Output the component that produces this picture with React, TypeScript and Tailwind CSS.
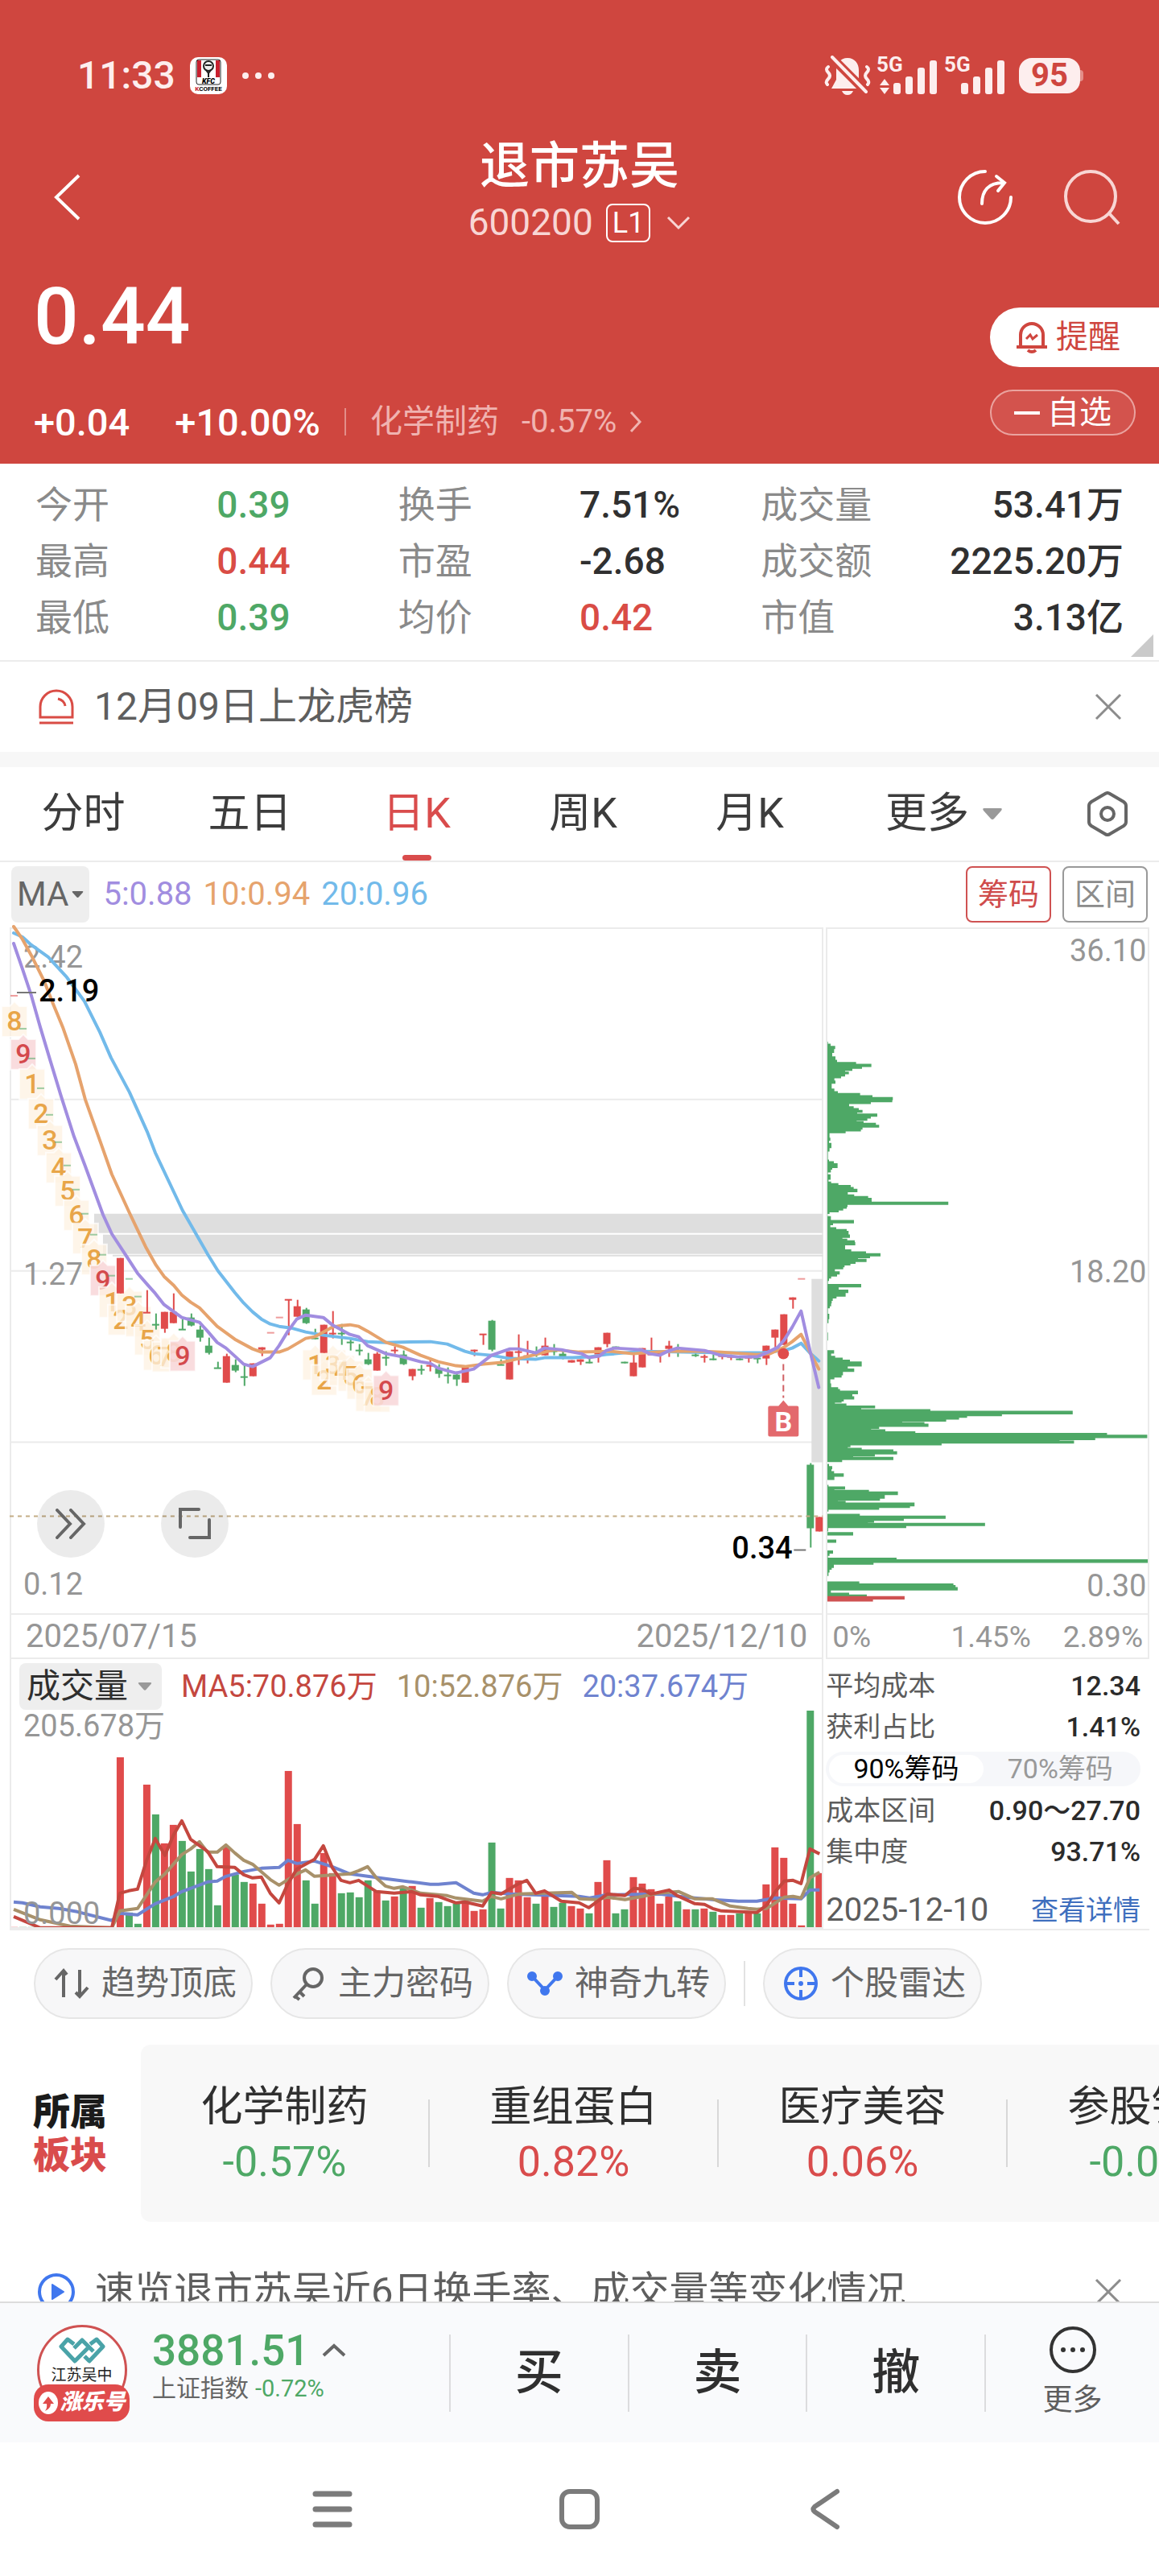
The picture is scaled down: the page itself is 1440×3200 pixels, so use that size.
import { useState } from 'react';
import clsx from 'clsx';

const RED = '#e04b4b';
const GREEN = '#4ea866';

// Trading days sit 11 units apart.
const dayX = (i: number) => 18 + i * 11;

type Candle = [day: number, up: 0 | 1, high: number, low: number, top: number, bottom: number];

const CANDLES: Candle[] = [
  [12, 1, 1564, 1608, 1564, 1608], [15, 1, 1604, 1632, 1631, 1633], [16, 0, 1633, 1653, 1646, 1648],
  [17, 1, 1631, 1657, 1631, 1652], [18, 1, 1608, 1645, 1631, 1645], [19, 0, 1640, 1653, 1652, 1654],
  [20, 0, 1633, 1649, 1638, 1648], [21, 0, 1648, 1668, 1653, 1663], [22, 0, 1663, 1684, 1673, 1682],
  [23, 0, 1693, 1701, 1700, 1702], [24, 1, 1683, 1719, 1686, 1719], [25, 0, 1690, 1706, 1697, 1704],
  [26, 0, 1696, 1723, 1711, 1713], [27, 1, 1695, 1711, 1695, 1711], [28, 1, 1675, 1686, 1675, 1678],
  [31, 1, 1616, 1660, 1615, 1617], [32, 1, 1616, 1637, 1624, 1637], [33, 0, 1626, 1646, 1628, 1645],
  [34, 0, 1652, 1665, 1663, 1665], [35, 1, 1647, 1682, 1647, 1682], [36, 1, 1630, 1664, 1657, 1659],
  [37, 0, 1646, 1672, 1657, 1659], [38, 0, 1665, 1679, 1668, 1670], [39, 0, 1671, 1685, 1678, 1680],
  [40, 0, 1682, 1697, 1690, 1696], [41, 1, 1681, 1704, 1683, 1704], [42, 0, 1680, 1698, 1687, 1689],
  [43, 1, 1674, 1683, 1678, 1680], [44, 0, 1679, 1697, 1684, 1696], [45, 1, 1702, 1716, 1702, 1711],
  [46, 0, 1697, 1709, 1702, 1704], [47, 1, 1690, 1705, 1697, 1699], [48, 0, 1696, 1713, 1701, 1708],
  [49, 0, 1700, 1720, 1709, 1711], [50, 0, 1705, 1723, 1709, 1715], [51, 1, 1700, 1719, 1700, 1719],
  [52, 1, 1678, 1686, 1678, 1680], [53, 1, 1659, 1672, 1658, 1660], [54, 0, 1641, 1680, 1642, 1678],
  [55, 0, 1690, 1697, 1696, 1698], [56, 1, 1680, 1715, 1680, 1715], [57, 1, 1659, 1697, 1680, 1682],
  [58, 1, 1667, 1695, 1685, 1687], [59, 0, 1674, 1687, 1682, 1684], [60, 1, 1663, 1685, 1673, 1685],
  [61, 0, 1671, 1685, 1679, 1681], [62, 0, 1679, 1690, 1683, 1688], [63, 1, 1691, 1694, 1691, 1694],
  [64, 1, 1690, 1697, 1690, 1693], [65, 0, 1689, 1695, 1693, 1695], [66, 1, 1675, 1694, 1675, 1684],
  [67, 1, 1657, 1675, 1657, 1671], [68, 0, 1674, 1676, 1674, 1676], [69, 0, 1693, 1695, 1693, 1695],
  [70, 1, 1684, 1711, 1694, 1711], [71, 1, 1676, 1700, 1676, 1700], [72, 1, 1663, 1684, 1683, 1685],
  [73, 1, 1680, 1694, 1682, 1684], [74, 1, 1667, 1687, 1673, 1677], [75, 0, 1671, 1687, 1680, 1682],
  [77, 0, 1682, 1687, 1684, 1686], [78, 1, 1684, 1694, 1686, 1688], [79, 0, 1684, 1691, 1689, 1691],
  [80, 1, 1684, 1690, 1685, 1687], [81, 1, 1684, 1691, 1686, 1688], [82, 0, 1687, 1691, 1689, 1691],
  [83, 1, 1685, 1694, 1687, 1689], [84, 0, 1685, 1695, 1688, 1690], [85, 1, 1673, 1697, 1673, 1689],
  [86, 1, 1653, 1680, 1653, 1663], [87, 1, 1634, 1672, 1634, 1672], [88, 1, 1613, 1627, 1613, 1616],
  [90, 0, 1819, 1924, 1821, 1900], [91, 1, 1886, 1904, 1886, 1904],
];

// Limit days: open, high, low and close are one price.
const FLAT_DAYS: [day: number, up: 0 | 1, y: number][] = [
  [0, 1, 1238], [1, 0, 1279], [2, 0, 1316], [3, 0, 1353], [4, 0, 1386], [5, 0, 1420], [6, 0, 1449],
  [7, 0, 1479], [8, 0, 1509], [9, 0, 1535], [10, 0, 1560], [11, 0, 1586], [13, 0, 1590], [14, 0, 1612],
  [29, 1, 1657], [30, 1, 1638], [89, 1, 1590],
];

const NINE_TURNS: [day: number, count: number, top: number][] = [
  [0, 8, 1251], [1, 9, 1292], [2, 1, 1329], [3, 2, 1366], [4, 3, 1399], [5, 4, 1433], [6, 5, 1462],
  [7, 6, 1492], [8, 7, 1521], [9, 8, 1547], [10, 9, 1573], [11, 1, 1600], [12, 2, 1622], [13, 3, 1605],
  [14, 4, 1624], [15, 5, 1647], [16, 6, 1666], [17, 7, 1668], [18, 8, 1663], [19, 9, 1667],
  [34, 1, 1678], [35, 2, 1697], [36, 3, 1678], [37, 4, 1685], [38, 5, 1692], [39, 6, 1702],
  [40, 7, 1717], [41, 8, 1718], [42, 9, 1710],
];

const MA5 =
  '17,1173 28,1205 39,1238 50,1277 62,1317 76,1363 92,1413 106,1450 128,1510 139,1534 158,1563 171,1583 184,1598 193,1608 204,1622 226,1638 248,1644 258,1655 270,1669 281,1676 303,1696 314,1699 336,1688 347,1673 358,1655 369,1640 380,1635 402,1638 413,1647 435,1659 446,1662 457,1673 480,1683 501,1687 523,1693 535,1695 545,1701 567,1707 589,1702 611,1685 634,1677 645,1677 666,1682 677,1676 698,1678 712,1681 723,1683 732,1688 745,1686 754,1679 764,1676 797,1678 808,1683 820,1685 830,1680 842,1676 876,1679 896,1685 919,1687 941,1687 955,1681 967,1675 975,1666 985,1650 996,1630 1007,1679 1018,1725';
const MA10 =
  '17,1152 28,1168 39,1188 55,1220 66,1248 78,1277 94,1323 106,1367 126,1423 139,1460 161,1508 181,1550 194,1573 204,1587 216,1598 226,1610 237,1619 248,1626 270,1649 292,1665 314,1677 325,1681 347,1681 358,1677 380,1664 391,1662 413,1650 424,1648 435,1647 446,1649 457,1655 480,1669 501,1675 523,1685 545,1693 567,1698 578,1699 601,1696 624,1694 645,1689 666,1684 689,1678 720,1681 760,1680 787,1683 830,1680 875,1680 897,1681 940,1684 957,1683 975,1675 985,1668 996,1659 1007,1681 1018,1702';
const MA20 =
  '17,1160 28,1165 39,1175 60,1190 71,1202 83,1215 105,1245 124,1283 138,1315 161,1358 183,1407 193,1433 227,1505 258,1559 271,1580 292,1607 303,1620 314,1631 325,1640 336,1646 347,1649 362,1651 380,1656 402,1660 435,1664 457,1668 480,1669 535,1668 556,1671 578,1680 589,1683 611,1685 634,1689 666,1690 677,1688 712,1688 732,1687 754,1684 775,1682 800,1680 900,1682 945,1682 975,1679 985,1676 996,1670 1007,1682 1018,1692';

const VOL_TOPS = [
  2394, 2394, 2394, 2395, 2395, 2395, 2395, 2395, 2395, 2395, 2395, 2395, 2183, 2376, 2390, 2217, 2254,
  2290, 2267, 2287, 2325, 2297, 2322, 2367, 2294, 2329, 2338, 2340, 2365, 2391, 2390, 2200, 2266, 2336,
  2365, 2302, 2327, 2352, 2351, 2357, 2336, 2350, 2361, 2356, 2345, 2343, 2370, 2358, 2363, 2368, 2365,
  2361, 2374, 2372, 2289, 2371, 2333, 2336, 2357, 2365, 2355, 2369, 2364, 2368, 2371, 2377, 2338, 2311,
  2377, 2372, 2332, 2340, 2347, 2365, 2356, 2362, 2372, 2372, 2371, 2375, 2379, 2379, 2377, 2376, 2377,
  2341, 2295, 2308, 2365, 2392, 2125, 2327,
];
const VOL_DOWN_DAYS = new Set([
  1, 2, 3, 4, 5, 6, 7, 8, 9, 10, 11, 13, 14, 16, 19, 20, 21, 22, 23, 25, 26, 33, 34, 37, 38, 39, 40, 42,
  44, 46, 48, 49, 50, 54, 55, 59, 61, 62, 65, 68, 69, 75, 77, 79, 82, 84, 90,
]);

const VOL_MA5 =
  '17,2381 50,2395 139,2395 149,2352 160,2349 171,2347 182,2312 193,2284 205,2305 216,2279 226,2262 237,2285 258,2300 270,2319 292,2320 303,2329 314,2333 325,2332 336,2352 347,2364 358,2340 369,2322 391,2310 402,2293 413,2320 424,2336 435,2339 446,2336 468,2350 490,2352 512,2350 523,2354 545,2356 567,2364 578,2363 600,2368 611,2351 623,2353 645,2340 655,2336 666,2352 677,2349 698,2362 720,2364 732,2370 755,2353 777,2355 788,2346 799,2347 809,2353 832,2348 842,2355 864,2365 876,2366 886,2371 897,2374 941,2376 953,2367 964,2350 975,2337 986,2336 996,2340 1007,2297 1019,2303';
const VOL_MA10 =
  '17,2372 50,2385 87,2393 139,2395 149,2374 171,2371 193,2338 205,2328 226,2304 237,2297 248,2288 258,2301 270,2301 281,2292 292,2302 303,2311 314,2316 336,2335 347,2342 369,2328 380,2323 391,2331 435,2328 446,2324 457,2319 468,2333 479,2343 490,2346 501,2344 523,2352 556,2355 567,2358 600,2362 611,2356 623,2359 645,2353 711,2351 721,2359 742,2360 755,2357 777,2360 799,2356 818,2352 844,2350 864,2359 886,2359 908,2368 930,2371 941,2372 953,2371 975,2357 986,2356 996,2358 1007,2333 1019,2326';
const VOL_MA20 =
  '17,2363 28,2364 50,2369 73,2371 96,2375 139,2386 149,2377 171,2379 193,2365 216,2356 226,2350 258,2338 270,2337 281,2331 303,2325 325,2321 347,2320 358,2311 369,2315 391,2312 413,2319 435,2328 457,2331 479,2334 512,2338 535,2341 545,2341 567,2339 589,2352 600,2354 611,2351 634,2353 720,2356 733,2358 755,2354 820,2353 853,2357 886,2360 918,2362 941,2362 964,2358 996,2359 1007,2348 1019,2348';

// Cost distribution: each entry starts a row at y that reaches to x; it lasts until the next entry.
const CHIP_ROWS: [y: number, x: number][] = [
  [90, 84], [128, 78], [227, 84], [239, 78], [261, 84], [280, 78],
  [465, 86], [473, 96], [481, 113], [493, 109], [507, 102], [520, 114], [533, 120], [541, 191], [548, 248],
  [560, 213], [567, 177], [574, 150], [577, 164], [587, 150], [595, 135], [602, 110], [610, 114], [622, 100],
  [640, 110], [650, 123], [657, 206], [665, 252], [672, 328], [684, 326], [691, 246], [698, 165], [706, 182],
  [713, 201], [720, 215], [730, 195], [733, 270], [745, 246], [752, 233], [760, 193], [762, 219], [768, 265],
  [775, 277], [786, 215], [793, 209], [800, 152], [807, 92], [823, 95], [835, 90], [843, 99], [862, 92],
  [875, 86], [905, 90], [911, 108], [919, 122], [937, 102], [943, 97], [953, 86], [960, 96], [980, 88],
  [987, 98], [993, 125], [1000, 171], [1007, 182], [1014, 196], [1027, 160], [1035, 184], [1041, 236],
  [1048, 249], [1062, 535], [1074, 159], [1082, 156], [1088, 143], [1095, 126], [1102, 92], [1108, 85],
  [1116, 97], [1130, 183], [1143, 105], [1150, 95], [1157, 117], [1164, 156], [1171, 163], [1184, 168],
  [1197, 140], [1200, 158], [1206, 186], [1213, 188], [1225, 150], [1240, 173], [1247, 228], [1254, 282],
  [1266, 243], [1273, 198], [1275, 230], [1287, 189], [1294, 170], [1300, 148], [1307, 143], [1314, 112],
  [1322, 130], [1334, 120], [1341, 98], [1349, 90], [1358, 86], [1369, 210], [1382, 126], [1390, 162],
  [1403, 152], [1416, 118], [1423, 104], [1432, 100], [1442, 98], [1452, 93], [1460, 86], [1480, 91],
  [1500, 88], [1515, 82], [1550, 86], [1580, 83], [1616, 109], [1629, 98], [1637, 113], [1644, 141],
  [1651, 168], [1658, 212], [1677, 160], [1684, 184], [1697, 142], [1710, 137], [1718, 110], [1725, 95],
  [1740, 98], [1754, 124], [1761, 131], [1767, 198], [1780, 177], [1788, 184], [1800, 145], [1807, 137],
  [1812, 112], [1815, 155], [1822, 262], [1833, 210], [1836, 468], [1842, 999], [1855, 735], [1862, 605],
  [1868, 575], [1875, 527], [1882, 363], [1884, 446], [1890, 461], [1902, 277], [1909, 247], [1911, 300],
  [1918, 412], [1924, 1127], [1931, 1277], [1944, 1083], [1951, 950], [1953, 1004], [1964, 510], [1971, 170],
  [1978, 160], [1980, 212], [1986, 330], [1993, 344], [2005, 261], [2012, 180], [2014, 330], [2026, 139],
  [2033, 84], [2040, 90], [2048, 102], [2060, 99], [2067, 109], [2075, 145], [2088, 110], [2100, 84],
  [2118, 88], [2124, 150], [2135, 110], [2137, 239], [2143, 347], [2156, 298], [2170, 280], [2177, 123],
  [2178, 152], [2184, 409], [2198, 392], [2204, 277], [2211, 88], [2218, 82], [2226, 205], [2233, 525],
  [2245, 369], [2252, 258], [2259, 235], [2260, 672], [2272, 378], [2279, 87], [2292, 83], [2294, 180],
  [2307, 78], [2322, 117], [2334, 78], [2342, 84], [2355, 78], [2363, 105], [2375, 92], [2383, 86],
  [2390, 342], [2396, 1284], [2409, 256], [2416, 108], [2428, 100], [2435, 92], [2445, 88], [2458, 83],
  [2470, 78], [2478, 203], [2486, 554], [2492, 562], [2499, 570], [2512, 97], [2520, 165], [2527, 231],
  [2535, 78],
];

const chipPath = CHIP_ROWS.reduce((d, [y, x]) => `${d} V${y} H${x}`, 'M78 39') + ' Z';

const STATS: { label: string; value: string; tone: 'up' | 'down' | 'plain'; right?: boolean }[] = [
  { label: '今开', value: '0.39', tone: 'down' },
  { label: '换手', value: '7.51%', tone: 'plain' },
  { label: '成交量', value: '53.41万', tone: 'plain', right: true },
  { label: '最高', value: '0.44', tone: 'up' },
  { label: '市盈', value: '-2.68', tone: 'plain' },
  { label: '成交额', value: '2225.20万', tone: 'plain', right: true },
  { label: '最低', value: '0.39', tone: 'down' },
  { label: '均价', value: '0.42', tone: 'up' },
  { label: '市值', value: '3.13亿', tone: 'plain', right: true },
];

const PERIODS = ['分时', '五日', '日K', '周K', '月K'];

const SECTORS = [
  { name: '化学制药', change: '-0.57%' },
  { name: '重组蛋白', change: '0.82%' },
  { name: '医疗美容', change: '0.06%' },
  { name: '参股银行', change: '-0.04%' },
];

function Triangle({ className }: { className?: string }) {
  return (
    <svg viewBox="0 0 26 15" className={className} aria-hidden="true">
      <path d="M3 0h20q3 0 1 3L15 13q-2 2-4 0L2 3Q0 0 3 0z" fill="currentColor" />
    </svg>
  );
}

function CloseIcon() {
  return (
    <svg viewBox="0 0 34 34" className="size-[34px]" aria-hidden="true">
      <path d="M2 2l30 30M32 2L2 32" stroke="#8c8c8c" strokeWidth="3" />
    </svg>
  );
}

function Signal({ transfer }: { transfer?: boolean }) {
  return (
    <svg viewBox="0 0 76 48" className="h-12 w-[76px] overflow-visible" fill="#fdeeee" aria-hidden="true">
      <text x="-1" y="19" fontSize="26" fontWeight="700">5G</text>
      <rect x="20" y="33" width="9" height="14" rx="3" />
      <rect x="35" y="25" width="9" height="22" rx="3" />
      <rect x="50" y="14" width="9" height="33" rx="3" />
      <rect x="65" y="5" width="9" height="42" rx="3" />
      {transfer && <path d="M9 28l6 8H3zM3 39h12l-6 8z" />}
    </svg>
  );
}

function StatusBar() {
  return (
    <div className="flex h-[68px] items-center justify-between pr-[94px] pl-24 text-[#fdeeee]">
      <div className="flex items-center gap-[18px]">
        <span className="text-[48px] leading-[68px] font-medium">11:33</span>
        <svg viewBox="0 0 46 46" className="size-[46px]" aria-label="KFC KCOFFEE">
          <rect width="46" height="46" rx="10" fill="#fff" />
          <rect x="8" y="3" width="30" height="31" rx="3" fill="#fff" stroke="#222" strokeWidth="1" />
          <path d="M9 4h5v21H9zM32 4h5v21h-5z" fill="#c8202f" />
          <circle cx="23" cy="11" r="6" fill="#eee" stroke="#222" strokeWidth="2" />
          <path d="M19 10h8M20 16l3 4 3-4M23 19v6" stroke="#222" strokeWidth="2" fill="none" />
          <text x="23" y="33" textAnchor="middle" fontSize="9" fontWeight="900" fontStyle="italic">KFC</text>
          <text x="23" y="42" textAnchor="middle" fontSize="8" fontWeight="700">
            <tspan fill="#c8202f">K</tspan>COFFEE
          </text>
        </svg>
        <svg viewBox="0 0 42 10" className="h-[10px] w-[42px]" fill="currentColor" aria-hidden="true">
          <circle cx="5" cy="5" r="4" />
          <circle cx="21" cy="5" r="4" />
          <circle cx="37" cy="5" r="4" />
        </svg>
      </div>
      <div className="flex items-center gap-2">
        <svg viewBox="0 0 58 50" className="h-[50px] w-[58px]" aria-hidden="true">
          <path d="M29 3c9 0 14 7 14 15v12l6 11H9l6-11V18c0-8 5-15 14-15zM22 44h14q-2 5-7 5t-7-5z" fill="#fdeeee" />
          <path d="M5 14q-4 3 0 7t0 8-1 7M53 14q4 3 0 7t0 8 1 7" stroke="#fdeeee" strokeWidth="4" fill="none" strokeLinecap="round" />
          <path d="M7 0l46 46" stroke="#cf463f" strokeWidth="11" />
          <path d="M10 2l42 43" stroke="#fdeeee" strokeWidth="4" strokeLinecap="round" />
        </svg>
        <Signal transfer />
        <Signal />
        <span className="ml-2 flex items-center">
          <span className="rounded-[16px] bg-[#fdeeee] px-[15px] text-[40px] leading-[44px] font-bold text-[#cf463f]">95</span>
          <i className="h-[14px] w-1 rounded-r bg-[#e38e89]" />
        </span>
      </div>
    </div>
  );
}

function Header() {
  return (
    <header className="bg-[#cf463f] pt-[60px] pb-[22px] text-white">
      <StatusBar />
      <div className="grid grid-cols-3 items-center px-12 pt-[43px]">
        <button type="button" aria-label="返回" className="justify-self-start pt-2 pl-4">
          <svg viewBox="0 0 36 60" className="h-[60px] w-9" fill="none" stroke="currentColor" strokeWidth="4">
            <path d="M34 3L6 30l28 27" />
          </svg>
        </button>
        <div className="flex flex-col items-center">
          <h1 className="text-[62px] leading-[72px] font-medium whitespace-nowrap">退市苏吴</h1>
          <button type="button" className="flex h-[67px] items-center gap-4 text-[#f8d6d4]">
            <span className="text-[46px] leading-[67px]">600200</span>
            <span className="rounded-lg border-2 border-white px-[6px] text-[36px] leading-[44px] text-white">L1</span>
            <svg viewBox="0 0 30 18" className="ml-1 h-[18px] w-[30px]" fill="none" stroke="currentColor" strokeWidth="3">
              <path d="M2 2l13 13L28 2" />
            </svg>
          </button>
        </div>
        <div className="flex items-center gap-[60px] justify-self-end pt-2">
          <button type="button" aria-label="分享">
            <svg viewBox="0 0 72 72" className="size-[72px]" fill="none" stroke="currentColor" strokeWidth="4">
              <path d="M36 4a32 32 0 1 0 32 32" strokeLinecap="round" />
              <path d="M32 44c0-16 8-26 26-26M50 10l10 8-8 10" strokeLinecap="round" />
            </svg>
          </button>
          <button type="button" aria-label="搜索" className="text-[#f8d6d4]">
            <svg viewBox="0 0 72 72" className="size-[72px]" fill="none" stroke="currentColor" strokeWidth="4">
              <circle cx="35" cy="35" r="31" />
              <path d="M58 56l12 13" />
            </svg>
          </button>
        </div>
      </div>
      <div className="flex justify-between pl-[42px]">
        <div>
          <p className="pt-8 text-[98px] leading-[104px] font-medium">0.44</p>
          <p className="mt-12 flex h-[60px] items-center text-[47px] font-medium">
            <span>+0.04</span>
            <span className="ml-14">+10.00%</span>
            <i className="mx-[30px] h-[34px] w-[2px] bg-[#e38e89]" />
            <a href="#sector" className="flex items-center gap-7 text-[40px] font-normal text-[#f0b3b0]">
              <span>化学制药</span>
              <span className="flex items-center gap-4">
                -0.57%
                <svg viewBox="0 0 16 28" className="h-7 w-4" fill="none" stroke="currentColor" strokeWidth="3">
                  <path d="M2 2l11 12L2 26" />
                </svg>
              </span>
            </a>
          </p>
        </div>
        <div className="flex flex-col items-start gap-7 pt-[72px]">
          <button type="button" className="flex h-[74px] items-center gap-[10px] self-stretch rounded-l-full bg-white pr-[46px] pl-8 text-[40px] text-[#cf463f]">
            <svg viewBox="0 0 40 42" className="h-[42px] w-10" fill="none" stroke="currentColor" strokeWidth="4">
              <path d="M6 32V18a14 14 0 0 1 28 0v14M1 33h38M15 37q5 4 10 0" />
              <path d="M13 23l5-5 3 5 6-5" strokeWidth="3" />
            </svg>
            提醒
          </button>
          <button type="button" className="mr-[29px] flex h-[57px] items-center gap-[9px] rounded-full border-2 border-[#eaa39f] bg-[#d3534d] px-7 text-[40px] leading-none">
            <i className="h-1 w-8 bg-white" />
            自选
          </button>
        </div>
      </div>
    </header>
  );
}

function Stats() {
  return (
    <section className="relative border-b-2 border-[#ececec] px-11 pt-4 pb-[18px]">
      <dl className="grid grid-cols-3 text-[46px] leading-[70px] whitespace-nowrap">
        {STATS.map((s) => (
          <div key={s.label} className="grid grid-cols-2">
            <dt className="text-[#8a8a8a]">{s.label}</dt>
            <dd
              className={clsx(
                'font-medium',
                s.right && 'text-right',
                s.tone === 'up' && 'text-[#d94c45]',
                s.tone === 'down' && 'text-[#4ea866]',
                s.tone === 'plain' && 'text-[#303030]',
              )}
            >
              {s.value}
            </dd>
          </div>
        ))}
      </dl>
      <svg viewBox="0 0 28 28" className="absolute right-[7px] bottom-1 size-7" aria-hidden="true">
        <path d="M28 0v28H0z" fill="#cacaca" />
      </svg>
    </section>
  );
}

function Notice() {
  return (
    <section className="flex h-28 items-center pr-[46px] pl-[47px] text-[48px] text-[#5e5e5e]">
      <svg viewBox="0 0 46 44" className="h-11 w-[46px]" fill="none" stroke="#d94c45" strokeWidth="3" aria-hidden="true">
        <path d="M3 35V22a20 20 0 0 1 40 0v13zM2 42h42" />
        <path d="M25 12q8 2 9 9" />
      </svg>
      <span className="ml-6 leading-[72px]">12月09日上龙虎榜</span>
      <button type="button" aria-label="关闭" className="ml-auto">
        <CloseIcon />
      </button>
    </section>
  );
}

function PeriodTabs() {
  const [active, setActive] = useState('日K');
  return (
    <nav className="flex h-[118px] border-b-2 border-[#ececec] text-[52px] leading-[116px] text-[#3c3c3c]">
      {PERIODS.map((p) => (
        <button
          key={p}
          type="button"
          onClick={() => setActive(p)}
          className={clsx('relative flex-[207]', p === active && 'text-[#d94c4c]')}
        >
          {p}
          {p === active && (
            <i className="absolute bottom-0 left-1/2 h-[7px] w-9 -translate-x-1/2 rounded-full bg-[#d94c4c]" />
          )}
        </button>
      ))}
      <button type="button" className="flex flex-[276] items-center justify-center gap-4">
        更多
        <Triangle className="h-[15px] w-[26px] text-[#999]" />
      </button>
      <button type="button" aria-label="设置" className="flex flex-[129] items-center justify-center">
        <svg viewBox="0 0 52 56" className="h-14 w-[52px]" fill="none" stroke="#666" strokeWidth="4">
          <path d="M23 3q3-2 6 0l17 10q3 2 3 5v20q0 3-3 5L29 53q-3 2-6 0L6 43q-3-2-3-5V18q0-3 3-5z" />
          <circle cx="26" cy="28" r="8" />
        </svg>
      </button>
    </nav>
  );
}

function KLineChart() {
  return (
    <div className="relative">
      <svg viewBox="12 1153 1012 853" className="block h-auto w-full overflow-visible" role="img" aria-label="日K线图">
        <path d="M12 1367H1023M12 1580H1023M12 1793H1023" stroke="#ebebeb" strokeWidth="2" />
        <g fill="#dedede">
          <rect x="117" y="1509" width="906" height="24" />
          <rect x="128" y="1535" width="895" height="24" />
          <rect x="140" y="1560" width="883" height="2" />
          <rect x="1009" y="1590" width="14" height="228" />
        </g>

        {NINE_TURNS.map(([day, count, top]) => {
          const x = dayX(day);
          const nine = count === 9;
          return (
            <g key={day}>
              <path
                d={`M${x - 16} ${top}h10l6-6 6 6h10v38h-32z`}
                fill={nine ? '#f8d8da' : '#fdf1e1'}
                fillOpacity={nine ? 0.9 : 0.75}
                stroke="#fff"
                strokeOpacity="0.7"
                strokeWidth="2"
              />
              <text x={x} y={top + 30} textAnchor="middle" fontSize="34" fontWeight="500" fill={nine ? '#d4494c' : '#e8a548'}>
                {count}
              </text>
            </g>
          );
        })}

        {FLAT_DAYS.map(([day, up, y]) => (
          <rect key={day} x={dayX(day) - 5} y={y - 1} width="9" height="2" fill={up ? RED : GREEN} opacity="0.55" />
        ))}
        {CANDLES.map(([day, up, high, low, top, bottom]) => (
          <g key={day} fill={up ? RED : GREEN}>
            <rect x={dayX(day) - 1} y={high} width="2" height={low - high} />
            <rect x={dayX(day) - 5} y={top} width="9" height={bottom - top} />
          </g>
        ))}

        <g fontSize="38" fill="#969696">
          <text x="29" y="1203">2.42</text>
          <text x="29" y="1597">1.27</text>
          <text x="29" y="1983">0.12</text>
        </g>

        <g fill="none" strokeWidth="4" strokeLinejoin="round" strokeLinecap="round">
          <polyline points={MA20} stroke="#72baea" />
          <polyline points={MA10} stroke="#e6a36d" />
          <polyline points={MA5} stroke="#a18de0" />
        </g>

        <g fontSize="38" fontWeight="500" fill="#000">
          <text x="48" y="1245">2.19</text>
          <text x="910" y="1938">0.34</text>
        </g>
        <path d="M21 1234h24M987 1927h15" stroke="#777" strokeWidth="2" />

        <circle cx="974" cy="1683" r="7" fill={RED} />
        <path d="M974 1696v42" stroke="#d06064" strokeWidth="2" strokeDasharray="8 5" />
        <path d="M957 1748h11l6-7 6 7h11q2 0 2 2v34q0 2-2 2h-34q-2 0-2-2v-34q0-2 2-2z" fill="#e3696d" />
        <text x="974" y="1779" textAnchor="middle" fontSize="34" fontWeight="700" fill="#fff">B</text>
        <path d="M12 1885H1023" stroke="#c4ad86" strokeWidth="2" strokeDasharray="5 5" />
      </svg>
      <div className="absolute bottom-[69px] left-[34px] flex gap-[70px]">
        <button type="button" aria-label="前进" className="flex size-[84px] items-center justify-center rounded-full bg-black/8">
          <svg viewBox="0 0 38 38" className="size-[38px]" fill="none" stroke="#666" strokeWidth="4" strokeLinecap="round">
            <path d="M2 2l16 17L2 36M19 2l16 17-16 17" />
          </svg>
        </button>
        <button type="button" aria-label="全屏" className="flex size-[84px] items-center justify-center rounded-full bg-black/8">
          <svg viewBox="0 0 40 40" className="size-10" fill="none" stroke="#666" strokeWidth="4" strokeLinecap="round">
            <path d="M2 24V2h23M38 15v22H14" />
          </svg>
        </button>
      </div>
    </div>
  );
}

function VolumeChart() {
  return (
    <svg viewBox="12 2124 1012 272" className="block h-auto w-full" role="img" aria-label="成交量">
      {VOL_TOPS.map((top, i) => (
        <rect key={i} x={dayX(i) - 5} y={top} width="9" height={2396 - top} fill={VOL_DOWN_DAYS.has(i) ? GREEN : RED} />
      ))}
      <g fill="none" strokeWidth="4" strokeLinejoin="round">
        <polyline points={VOL_MA20} stroke="#6f83cf" />
        <polyline points={VOL_MA10} stroke="#a8916a" />
        <polyline points={VOL_MA5} stroke="#c4473f" />
      </g>
      <g fontSize="38" fill="#969696">
        <text x="29" y="2157">205.678万</text>
        <text x="29" y="2390">0.000</text>
      </g>
    </svg>
  );
}

function ChipChart() {
  return (
    <svg viewBox="78 39 1206 2559" className="block h-auto w-full" role="img" aria-label="筹码分布">
      <path d={chipPath} fill={GREEN} />
      <path d="M78 2533H372V2546H254V2553H78z" fill="#cf5252" />
      <g fontSize="114" fill="#969696" textAnchor="end">
        <text x="1274" y="165">36.10</text>
        <text x="1274" y="1364">18.20</text>
        <text x="1274" y="2534">0.30</text>
      </g>
    </svg>
  );
}

function ChipRow({ label, value }: { label: string; value: string }) {
  return (
    <div className="flex justify-between leading-[51px]">
      <dt className="text-[#5c5c5c]">{label}</dt>
      <dd className="font-medium text-[#2b2b2b]">{value}</dd>
    </div>
  );
}

function ChipPanel() {
  const [range, setRange] = useState('90%筹码');
  return (
    <div className="flex flex-1 flex-col pt-2 pr-[11px] text-[34px]">
      <dl>
        <ChipRow label="平均成本" value="12.34" />
        <ChipRow label="获利占比" value="1.41%" />
      </dl>
      <div className="my-[5px] flex h-[43px] rounded-full bg-[#f6f7fa] p-1">
        {['90%筹码', '70%筹码'].map((r) => (
          <button
            key={r}
            type="button"
            onClick={() => setRange(r)}
            className={clsx(
              'flex-1 rounded-full text-[34px] leading-[35px]',
              r === range ? 'bg-white text-black' : 'text-[#999]',
            )}
          >
            {r}
          </button>
        ))}
      </div>
      <dl>
        <ChipRow label="成本区间" value="0.90～27.70" />
        <ChipRow label="集中度" value="93.71%" />
      </dl>
      <div className="mt-auto flex items-center justify-between leading-[46px]">
        <time className="text-[40px] text-[#5c5c5c]">2025-12-10</time>
        <a href="#chips" className="text-[#3f6fbe]">查看详情</a>
      </div>
    </div>
  );
}

function ChartSection() {
  return (
    <section className="px-3">
      <div className="flex items-center pt-[5px] pb-[6px] pl-[2px] text-[40px] leading-[70px]">
        <button type="button" className="flex items-center gap-1 rounded-lg bg-[#eee] px-[7px] text-[42px] text-[#666]">
          MA
          <Triangle className="w-[15px]" />
        </button>
        <span className="ml-[17px] text-[#a18de0]">5:0.88</span>
        <span className="ml-[14px] text-[#e6a36d]">10:0.94</span>
        <span className="ml-[14px] text-[#72baea]">20:0.96</span>
        <button type="button" className="ml-auto h-[70px] rounded-lg border-2 border-[#cf5252] px-[13px] text-[38px] leading-[62px] text-[#cf4b4b]">
          筹码
        </button>
        <button type="button" className="mr-[2px] ml-[14px] h-[70px] rounded-lg border-2 border-[#999] px-[13px] text-[38px] leading-[62px] text-[#8c8c8c]">
          区间
        </button>
      </div>

      <div className="flex gap-[3px] border-b-2 border-[#ececec]">
        <div className="min-w-0 flex-[1012] outline-2 -outline-offset-2 outline-[#ebebeb]">
          <KLineChart />
          <div className="flex h-[57px] items-center justify-between border-y-2 border-[#ebebeb] px-5 text-[40px] text-[#969696]">
            <time>2025/07/15</time>
            <time>2025/12/10</time>
          </div>
          <div className="flex h-[63px] items-center gap-6 pt-1 pl-3 text-[38px] whitespace-nowrap">
            <button type="button" className="flex h-[58px] items-center gap-3 rounded-lg bg-[#eee] pr-3 pl-[9px] text-[42px] text-[#2f2f2f]">
              成交量
              <Triangle className="w-[18px] text-[#999]" />
            </button>
            <span className="text-[#c4473f]">MA5:70.876万</span>
            <span className="text-[#a8916a]">10:52.876万</span>
            <span className="text-[#6f83cf]">20:37.674万</span>
          </div>
          <VolumeChart />
        </div>
        <div className="flex min-w-0 flex-[402] flex-col">
          <div className="outline-2 -outline-offset-2 outline-[#ebebeb]">
            <ChipChart />
            <div className="flex h-[57px] items-center border-t-2 border-[#ebebeb] pr-2 pl-2 text-[37px] text-[#969696]">
              <span className="flex-1">0%</span>
              <span className="pr-10">1.45%</span>
              <span>2.89%</span>
            </div>
          </div>
          <ChipPanel />
        </div>
      </div>
    </section>
  );
}

function ToolChips() {
  const chip =
    'flex h-[88px] items-center gap-[14px] rounded-full border-2 border-[#e6e6e6] bg-[#f7f7f8] pr-[18px] pl-[22px] text-[42px] whitespace-nowrap text-[#666]';
  return (
    <section className="flex items-center gap-[22px] px-[42px] pt-[22px]">
      <button type="button" className={chip}>
        <svg viewBox="0 0 46 46" className="size-[46px]" fill="none" stroke="#666" strokeWidth="4">
          <path d="M13 40V7M3 18L13 7l4 5M33 6v33M43 28L33 39l-5-5" />
        </svg>
        趋势顶底
      </button>
      <button type="button" className={chip}>
        <svg viewBox="0 0 46 46" className="size-[46px]" fill="none" stroke="#666" strokeWidth="4">
          <circle cx="29" cy="16" r="11" />
          <path d="M21 24L5 41M12 33l6 6M7 39l5 4" />
        </svg>
        主力密码
      </button>
      <button type="button" className={chip}>
        <svg viewBox="0 0 46 46" className="size-[46px]" fill="#4077ee" stroke="#4077ee" strokeWidth="4">
          <path d="M7 14l16 17 16-17" fill="none" />
          <circle cx="7" cy="14" r="4" />
          <circle cx="23" cy="32" r="4" />
          <circle cx="39" cy="14" r="4" />
        </svg>
        神奇九转
      </button>
      <i className="h-[56px] w-[2px] bg-[#e2e2e2]" />
      <button type="button" className={chip}>
        <svg viewBox="0 0 46 46" className="size-[46px]" fill="none" stroke="#4077ee" strokeWidth="4">
          <circle cx="23" cy="23" r="19" />
          <path d="M23 4v11M23 31v11M4 23h11M31 23h11" />
          <circle cx="23" cy="23" r="3" fill="#4077ee" stroke="none" />
        </svg>
        个股雷达
      </button>
    </section>
  );
}

function Sectors() {
  return (
    <section id="sector" className="mt-8 flex">
      <h2 className="flex w-[175px] shrink-0 flex-col justify-center pl-[41px] text-[46px] leading-[54px] font-black text-[#1b1b1b]">
        所属
        <span className="text-[#d94c4c]">板块</span>
      </h2>
      <ul className="flex h-[220px] min-w-0 flex-1 items-center overflow-hidden rounded-l-xl bg-[#f8f8f8]">
        {SECTORS.map((s) => (
          <li key={s.name} className="flex shrink-0 basis-[359px] items-center">
            <a href="#sector" className="flex-1 pt-1 text-center text-[52px] leading-[68px]">
              <span className="block text-[#2f2f2f]">{s.name}</span>
              <span className={clsx('block', s.change.startsWith('-') ? 'text-[#4ea866]' : 'text-[#d94c4c]')}>
                {s.change}
              </span>
            </a>
            <i className="h-[84px] w-[2px] bg-[#d8d8d8]" />
          </li>
        ))}
      </ul>
    </section>
  );
}

function Digest() {
  return (
    <section className="flex items-center pt-[51px] pr-[46px] pl-[46px] text-[49px] leading-[72px] text-[#5e5e5e]">
      <svg viewBox="0 0 48 48" className="size-12 shrink-0" aria-hidden="true">
        <circle cx="24" cy="24" r="21" fill="none" stroke="#4077ee" strokeWidth="4" />
        <path d="M19 15l14 9-14 9z" fill="#4077ee" stroke="#4077ee" strokeWidth="2" strokeLinejoin="round" />
      </svg>
      <a href="#digest" className="ml-6 whitespace-nowrap">速览退市苏吴近6日换手率、成交量等变化情况</a>
      <button type="button" aria-label="关闭" className="ml-auto">
        <CloseIcon />
      </button>
    </section>
  );
}

function TradeBar() {
  return (
    <footer className="flex h-[175px] items-center border-t-2 border-[#dcdcdc] bg-[#f9fafc]">
      <div className="flex min-w-0 flex-[561] items-center">
        <a href="#account" className="relative ml-[42px] flex h-[120px] w-[119px] shrink-0 flex-col items-center">
          <span className="flex size-[112px] flex-col items-center rounded-full border-[3px] border-[#cf5252] bg-white pt-3">
            <svg viewBox="0 0 60 34" className="h-[34px] w-[60px]" fill="none" stroke="#4aa3a8" strokeWidth="5" strokeLinejoin="round">
              <path d="M20 9l-8-6-8 9 17 18 16-16" />
              <path d="M20 14L30 4l14 14" />
              <path d="M40 9l8-6 8 9-17 18-6-6" />
            </svg>
            <span className="mt-1 text-[19px] leading-[20px] whitespace-nowrap text-[#222]">江苏吴中</span>
          </span>
          <span className="absolute inset-x-0 bottom-0 flex h-[46px] items-center justify-center gap-[3px] rounded-[18px] bg-[#e04b4b] text-[27px] font-black whitespace-nowrap text-white italic">
            <svg viewBox="0 0 24 28" className="h-7 w-6">
              <ellipse cx="12" cy="14" rx="12" ry="14" fill="#fff" />
              <path d="M12 6l7 9h-4q0 6-7 9 3-4 2-9H5z" fill="#e04b4b" />
            </svg>
            涨乐号
          </span>
        </a>
        <button type="button" className="ml-7 flex flex-col items-start pb-4 whitespace-nowrap">
          <span className="flex items-center gap-4 text-[53px] leading-[54px] font-medium text-[#4ea866]">
            3881.51
            <svg viewBox="0 0 30 17" className="h-[17px] w-[30px]" fill="none" stroke="#666" strokeWidth="4">
              <path d="M2 15L15 3l13 12" />
            </svg>
          </span>
          <span className="flex items-center gap-2 text-[30px] leading-[40px] text-[#666]">
            上证指数 <span className="text-[29px] text-[#4ea866]">-0.72%</span>
          </span>
        </button>
      </div>
      {['买', '卖', '撤'].map((t) => (
        <button key={t} type="button" className="h-24 flex-[221] border-l-2 border-[#dcdcde] text-[60px] leading-[90px] font-medium text-[#2f2f2f]">
          {t}
        </button>
      ))}
      <button type="button" className="flex h-24 flex-[216] flex-col items-center justify-center gap-[9px] border-l-2 border-[#dcdcde] text-[37px] leading-[48px] text-[#5e5e5e]">
        <svg viewBox="0 0 60 60" className="size-[60px] shrink-0">
          <circle cx="30" cy="30" r="27" fill="none" stroke="#333" strokeWidth="4" />
          <path d="M18 30h0M30 30h0M42 30h0" stroke="#333" strokeWidth="6" strokeLinecap="round" />
        </svg>
        更多
      </button>
    </footer>
  );
}

function SystemNav() {
  return (
    <div className="flex h-[166px] items-center justify-center gap-[253px] bg-white text-[#7b7b7b]">
      <button type="button" aria-label="最近任务">
        <svg viewBox="0 0 54 54" className="size-[54px]" stroke="currentColor" strokeWidth="7" strokeLinecap="round">
          <path d="M6 8h42M6 27h42M6 46h42" />
        </svg>
      </button>
      <button type="button" aria-label="主屏幕">
        <svg viewBox="0 0 54 54" className="size-[54px]" fill="none" stroke="currentColor" strokeWidth="6">
          <rect x="5" y="5" width="44" height="44" rx="10" />
        </svg>
      </button>
      <button type="button" aria-label="返回">
        <svg viewBox="0 0 54 54" className="size-[54px]" fill="none" stroke="currentColor" strokeWidth="6" strokeLinecap="round" strokeLinejoin="round">
          <path d="M40 5L12 24q-3 3 0 6l28 19" />
        </svg>
      </button>
    </div>
  );
}

export default function App() {
  return (
    <div className="flex h-screen flex-col overflow-hidden bg-white font-['Roboto','Noto_Sans_CJK_SC',sans-serif] leading-none">
      <div className="min-h-0 flex-1 overflow-hidden">
        <Header />
        <Stats />
        <Notice />
        <div className="h-[19px] bg-[#f7f7f7]" />
        <PeriodTabs />
        <ChartSection />
        <ToolChips />
        <Sectors />
        <Digest />
      </div>
      <TradeBar />
      <SystemNav />
    </div>
  );
}
